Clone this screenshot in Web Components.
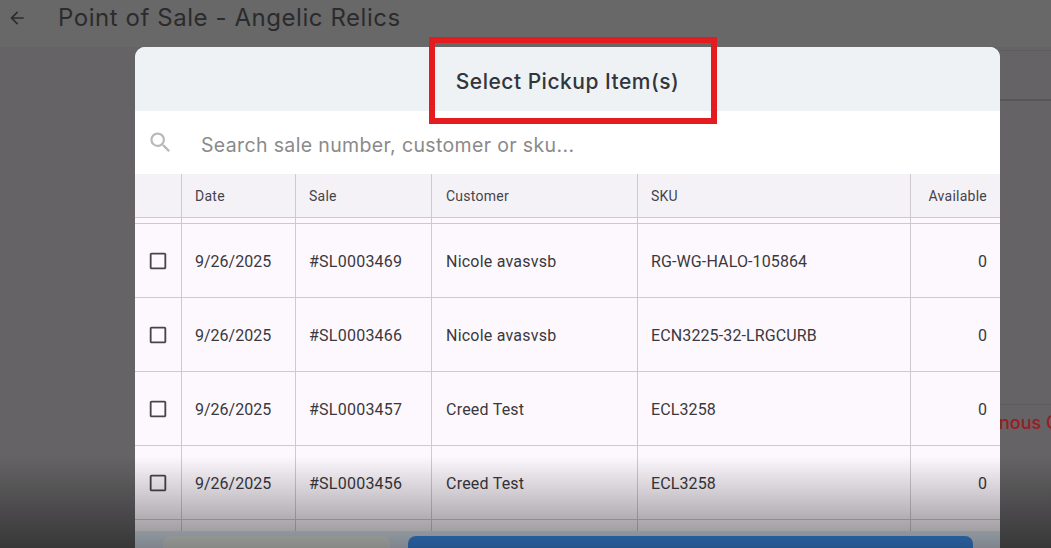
<!DOCTYPE html>
<html lang="en">
<head>
<meta charset="utf-8">
<title>Point of Sale - Angelic Relics</title>
<style>
  html, body { margin: 0; height: 100%; overflow: hidden; background: #656365; }
  body { font-family: "Roboto", "Liberation Sans", sans-serif; }
</style>
</head>
<body>
<pos-screen>
  <pos-app-bar slot="bar" heading="Point of Sale - Angelic Relics"></pos-app-bar>
  <pickup-dialog slot="dialog" heading="Select Pickup Item(s)" placeholder="Search sale number, customer or sku...">
    <pickup-row date="9/26/2025" sale="#SL0003469" customer="Nicole avasvsb" sku="RG-WG-HALO-105864" available="0"></pickup-row>
    <pickup-row date="9/26/2025" sale="#SL0003466" customer="Nicole avasvsb" sku="ECN3225-32-LRGCURB" available="0"></pickup-row>
    <pickup-row date="9/26/2025" sale="#SL0003457" customer="Creed Test" sku="ECL3258" available="0"></pickup-row>
    <pickup-row date="9/26/2025" sale="#SL0003456" customer="Creed Test" sku="ECL3258" available="0"></pickup-row>
  </pickup-dialog>
</pos-screen>

<script>
const HEADING_FONT = '"Inter", "Noto Sans", sans-serif';
const COLUMNS = "47px 114px 136px 206px 273px 89px";
const LINE = "#cec9d1";

class PosScreen extends HTMLElement {
  constructor() {
    super();
    this.attachShadow({ mode: "open" });
    this.shadowRoot.innerHTML = `
      <style>
        :host { display: block; position: relative; width: 100%; height: 548px; overflow: hidden; }
        .aside { position: absolute; left: 1000px; right: 0; top: 0; display: flex; flex-direction: column; }
        .band-top { height: 51px; border-bottom: 1px solid #5e5d5e; box-sizing: border-box; }
        .band-mid { height: 50px; border-bottom: 2px solid #575557; box-sizing: border-box; }
        .band-low { height: 304px; border-bottom: 1px solid #5c5b5c; box-sizing: border-box; }
        .band-text { overflow: hidden; padding-top: 6px; }
        .offer { display: block; color: #9a1c20; font: 500 18px/24px ${HEADING_FONT}; white-space: nowrap; margin-left: -1px; width: 52px; overflow: hidden; }
        .dim { position: absolute; left: 0; right: 0; bottom: 0; height: 92px; pointer-events: none;
               background: linear-gradient(to bottom, rgba(0,0,0,0), rgba(0,0,0,.44)); }
        .dialog-layer { position: absolute; left: 135px; top: 47px; width: 865px; }
        .note { position: absolute; left: 429px; top: 37px; width: 288px; height: 87px;
                box-sizing: border-box; border: 6px solid #e41c1f; pointer-events: none; }
      </style>
      <slot name="bar"></slot>
      <div class="aside">
        <div class="band-top"></div>
        <div class="band-mid"></div>
        <div class="band-low"></div>
        <div class="band-text"><span class="offer">nous C</span></div>
      </div>
      <div class="dialog-layer"><slot name="dialog"></slot></div>
      <div class="dim"></div>
      <div class="note"></div>
    `;
  }
}

class PosAppBar extends HTMLElement {
  constructor() {
    super();
    this.attachShadow({ mode: "open" });
  }

  connectedCallback() {
    this.shadowRoot.innerHTML = `
      <style>
        :host { display: flex; align-items: center; height: 36px; gap: 31px; padding-left: 7px; color: #2b2b2d; background: #686868; padding-bottom: 11px; }
        svg { width: 20px; height: 20px; fill: #2d2d2f; flex: none; }
        h1 { margin: 0; font: 400 24px/36px ${HEADING_FONT}; letter-spacing: .56px; white-space: nowrap; }
      </style>
      <svg viewBox="0 0 24 24"><path d="M20 11H7.83l5.59-5.59L12 4l-8 8 8 8 1.41-1.41L7.83 13H20v-2z"/></svg>
      <h1>${this.getAttribute("heading")}</h1>
    `;
  }
}

class PickupDialog extends HTMLElement {
  constructor() {
    super();
    this.attachShadow({ mode: "open" });
  }

  connectedCallback() {
    const headers = ["", "Date", "Sale", "Customer", "SKU", "Available"];
    const line = `1px solid ${LINE}`;
    this.shadowRoot.innerHTML = `
      <style>
        :host { display: flex; flex-direction: column; background: #fdf8fe; border-radius: 10px 10px 0 0; overflow: hidden; height: 520px; }
        .title { height: 64px; flex: none; display: flex; align-items: center; justify-content: center; background: #eef2f4; }
        h2 { margin: 4px 0 0; font: 500 21px/1 ${HEADING_FONT}; color: #33353c; letter-spacing: .5px; }
        .search { height: 63px; flex: none; display: flex; align-items: center; gap: 27px; padding-left: 12px; background: #fff; box-sizing: border-box; }
        .search svg { width: 27px; height: 27px; fill: #b9b9b9; flex: none; margin-top: -1px; }
        .search span { font: 400 19.5px/1 ${HEADING_FONT}; color: #8a8a8a; letter-spacing: .36px; white-space: nowrap; margin-top: 7px; }
        .head { height: 44px; flex: none; display: grid; grid-template-columns: ${COLUMNS}; background: #f5f2f7; border-bottom: ${line}; box-sizing: border-box; }
        .head div { display: flex; align-items: center; padding: 1px 13px 0; font-size: 14px; letter-spacing: .25px; color: #45434a; border-right: ${line}; box-sizing: border-box; }
        .head div:nth-child(4) { padding-left: 14px; }
        .head div:last-child { border-right: 0; justify-content: flex-end; padding-right: 13px; }
        .sliver, .rest { flex: none; display: grid; grid-template-columns: ${COLUMNS}; }
        .sliver { height: 5px; border-bottom: ${line}; }
        .rest { height: 11px; }
        .sliver i, .rest i { border-right: ${line}; }
        .sliver i:last-child, .rest i:last-child { border-right: 0; }
        .rows { flex: none; }
        .actions { flex: 1; display: flex; gap: 18px; padding: 5px 27px 0 28px; background: #e1ebf8; }
        .actions div { height: 40px; border-radius: 8px; }
        .cancel { width: 227px; flex: none; background: #eef2ed; }
        .confirm { flex: 1; background: #4096fa; }
      </style>
      <div class="title"><h2>${this.getAttribute("heading")}</h2></div>
      <div class="search">
        <svg viewBox="0 0 24 24"><path d="M15.5 14h-.79l-.28-.27A6.47 6.47 0 0 0 16 9.5 6.5 6.5 0 1 0 9.5 16c1.61 0 3.09-.59 4.23-1.57l.27.28v.79l5 4.99L20.49 19l-4.99-5zm-6 0C7.01 14 5 11.99 5 9.5S7.01 5 9.5 5 14 7.01 14 9.5 11.99 14 9.5 14z"/></svg>
        <span>${this.getAttribute("placeholder")}</span>
      </div>
      <div class="head">${headers.map((h) => `<div>${h}</div>`).join("")}</div>
      <div class="sliver">${headers.map(() => "<i></i>").join("")}</div>
      <div class="rows"><slot></slot></div>
      <div class="rest">${headers.map(() => "<i></i>").join("")}</div>
      <div class="actions"><div class="cancel"></div><div class="confirm"></div></div>
    `;
  }
}

class PickupRow extends HTMLElement {
  constructor() {
    super();
    this.attachShadow({ mode: "open" });
  }

  connectedCallback() {
    const get = (name) => this.getAttribute(name);
    const line = `1px solid ${LINE}`;
    this.shadowRoot.innerHTML = `
      <style>
        :host { display: grid; grid-template-columns: ${COLUMNS}; height: 74px; box-sizing: border-box; border-bottom: ${line}; color: #3a383d; font-size: 16px; }
        div { display: flex; align-items: center; padding: 2px 13px 0; border-right: ${line}; box-sizing: border-box; white-space: nowrap; }
        div:last-child { border-right: 0; justify-content: flex-end; padding-right: 13px; }
        .check { padding: 0 0 0 12px; }
        .sale { letter-spacing: .24px; }
        .customer { padding-left: 14px; letter-spacing: .22px; }
        .sku { letter-spacing: .12px; }
        svg { width: 22px; height: 22px; fill: #47454a; }
      </style>
      <div class="check"><svg viewBox="0 0 24 24"><path d="M19 5v14H5V5h14m0-2H5c-1.1 0-2 .9-2 2v14c0 1.1.9 2 2 2h14c1.1 0 2-.9 2-2V5c0-1.1-.9-2-2-2z"/></svg></div>
      <div>${get("date")}</div>
      <div class="sale">${get("sale")}</div>
      <div class="customer">${get("customer")}</div>
      <div class="sku">${get("sku")}</div>
      <div>${get("available")}</div>
    `;
  }
}

customElements.define("pos-screen", PosScreen);
customElements.define("pos-app-bar", PosAppBar);
customElements.define("pickup-dialog", PickupDialog);
customElements.define("pickup-row", PickupRow);
</script>
</body>
</html>
